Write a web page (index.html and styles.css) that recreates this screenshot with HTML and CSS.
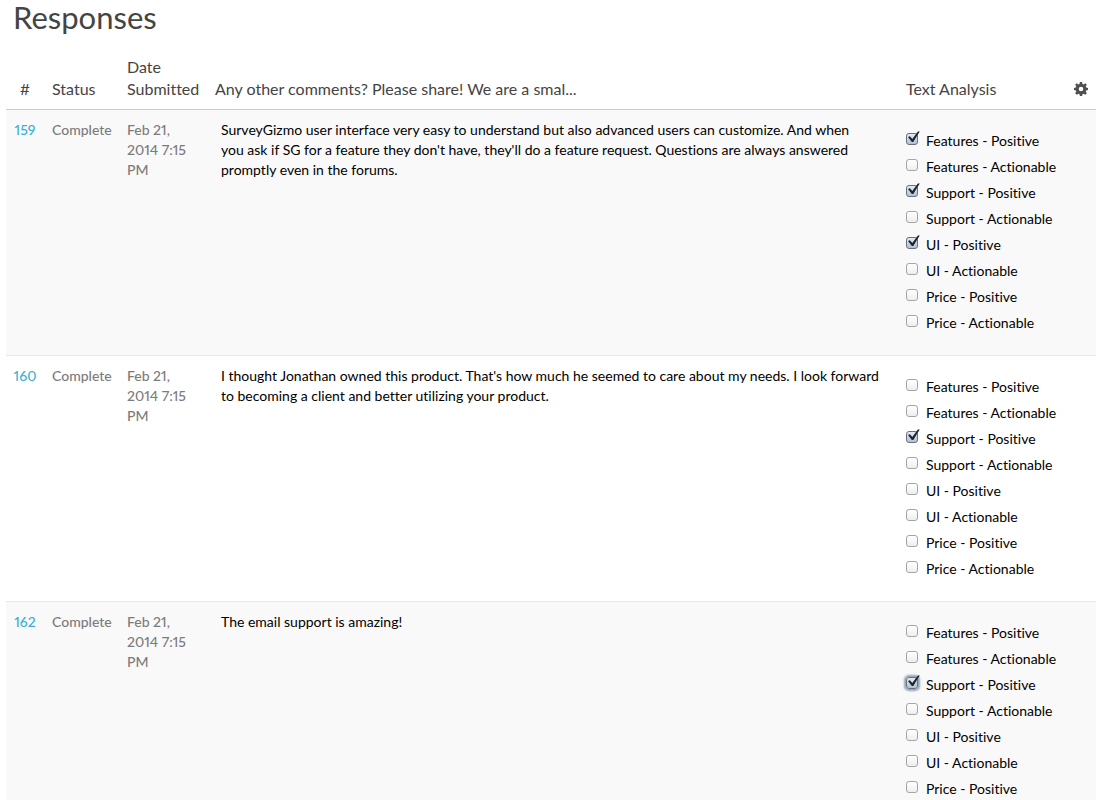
FILE: index.html
```
<!DOCTYPE html>
<html lang="en">
<head>
  <meta charset="UTF-8">
  <meta name="viewport" content="width=device-width, initial-scale=1.0">
  <title>Responses</title>
  <link rel="stylesheet" href="styles.css">
</head>
<body>
  <h1>Responses</h1>
  <table class="responses">
    <colgroup>
      <col class="col-id">
      <col class="col-status">
      <col class="col-date">
      <col>
      <col class="col-analysis">
      <col class="col-settings">
    </colgroup>
    <thead>
      <tr>
        <th class="id">#</th>
        <th>Status</th>
        <th>Date Submitted</th>
        <th>Any other comments? Please share! We are a smal...</th>
        <th>Text Analysis</th>
        <th class="settings">
          <button type="button" aria-label="Table settings">
            <svg viewBox="0 0 14 14" width="14" height="14"><path fill="#505050" fill-rule="evenodd" d="M5.9 0h2.2l.4 1.9 1.1.5 1.7-1.1 1.5 1.5-1.1 1.7.5 1.1 1.8.3v2.2l-1.8.4-.5 1.1 1.1 1.7-1.5 1.5-1.7-1.1-1.1.5L8.1 14H5.9l-.4-1.8-1.1-.5-1.7 1.1-1.5-1.5 1.1-1.7-.5-1.1L0 8.1V5.9l1.8-.3.5-1.1-1.1-1.7 1.5-1.5 1.7 1.1 1.1-.5zM7 4.7a2.3 2.3 0 1 0 0 4.6 2.3 2.3 0 0 0 0-4.6z"/></svg>
          </button>
        </th>
      </tr>
    </thead>
    <tbody>
      <tr>
        <td class="id"><a href="#159">159</a></td>
        <td class="meta">Complete</td>
        <td class="meta">Feb 21, 2014 7:15 PM</td>
        <td class="comment">SurveyGizmo user interface very easy to understand but also advanced users can customize. And when you&nbsp;ask if SG for a feature they don't have, they'll do a feature request. Questions are always answered promptly even in the forums.</td>
        <td class="analysis" colspan="2">
          <label><input type="checkbox" checked>Features - Positive</label>
          <label><input type="checkbox">Features - Actionable</label>
          <label><input type="checkbox" checked>Support - Positive</label>
          <label><input type="checkbox">Support - Actionable</label>
          <label><input type="checkbox" checked>UI - Positive</label>
          <label><input type="checkbox">UI - Actionable</label>
          <label><input type="checkbox">Price - Positive</label>
          <label><input type="checkbox">Price - Actionable</label>
        </td>
      </tr>
      <tr>
        <td class="id"><a href="#160">160</a></td>
        <td class="meta">Complete</td>
        <td class="meta">Feb 21, 2014 7:15 PM</td>
        <td class="comment">I thought Jonathan owned this product. That's how much he seemed to care about my needs. I look forward to becoming a client and better utilizing your product.</td>
        <td class="analysis" colspan="2">
          <label><input type="checkbox">Features - Positive</label>
          <label><input type="checkbox">Features - Actionable</label>
          <label><input type="checkbox" checked>Support - Positive</label>
          <label><input type="checkbox">Support - Actionable</label>
          <label><input type="checkbox">UI - Positive</label>
          <label><input type="checkbox">UI - Actionable</label>
          <label><input type="checkbox">Price - Positive</label>
          <label><input type="checkbox">Price - Actionable</label>
        </td>
      </tr>
      <tr>
        <td class="id"><a href="#162">162</a></td>
        <td class="meta">Complete</td>
        <td class="meta">Feb 21, 2014 7:15 PM</td>
        <td class="comment">The email support is amazing!</td>
        <td class="analysis" colspan="2">
          <label><input type="checkbox">Features - Positive</label>
          <label><input type="checkbox">Features - Actionable</label>
          <label><input type="checkbox" class="active" checked>Support - Positive</label>
          <label><input type="checkbox">Support - Actionable</label>
          <label><input type="checkbox">UI - Positive</label>
          <label><input type="checkbox">UI - Actionable</label>
          <label><input type="checkbox">Price - Positive</label>
        </td>
      </tr>
    </tbody>
  </table>
</body>
</html>
```
FILE: styles.css
```
body {
  margin: 0;
  padding: 0 6px;
  background: #fff;
  color: #000;
  font-family: Lato, "Open Sans", sans-serif;
  font-size: 14px;
  font-variant-ligatures: none;
  font-variant-numeric: proportional-nums;
  line-height: 20px;
}
h1 {
  margin: 0;
  padding: 0 7px;
  font-size: 31px;
  font-weight: 400;
  line-height: 34px;
  color: #444;
}
.responses {
  width: 100%;
  margin-top: 14px;
  table-layout: fixed;
  border-collapse: separate;
  border-spacing: 0;
}
.col-id {
  width: 38px;
}
.col-status {
  width: 75px;
}
.col-date {
  width: 88px;
}
.col-analysis {
  width: 160px;
}
.col-settings {
  width: 38px;
}
th {
  padding: 8px 8px 9px;
  border-bottom: 1px solid #ccc;
  font-size: 16px;
  font-weight: 400;
  line-height: 22px;
  text-align: left;
  vertical-align: bottom;
  color: #444;
}
td {
  padding: 10px 8px;
  border-bottom: 1px solid #e8e8e8;
  vertical-align: top;
}
tbody tr:nth-child(odd) {
  background: #f9f9f9;
}
th.id,
td.id {
  padding-left: 0;
  padding-right: 0;
  text-align: center;
}
.id a {
  color: #3fafd0;
  font-weight: 500;
  text-decoration: none;
}
.id a:hover {
  text-decoration: underline;
}
.meta {
  color: #7c7c7c;
  font-weight: 500;
}
.comment {
  padding-left: 14px;
}
.settings button {
  display: flex;
  align-items: center;
  height: 22px;
  margin-left: auto;
  padding: 0;
  border: 0;
  background: none;
  cursor: pointer;
}
.analysis {
  padding-top: 18px;
  padding-bottom: 19px;
}
.analysis label {
  display: flex;
  align-items: flex-start;
  gap: 8px;
  line-height: 26px;
}
input[type="checkbox"] {
  appearance: none;
  position: relative;
  box-sizing: border-box;
  flex: none;
  width: 12px;
  height: 12px;
  margin: 5px 0 0;
  border: 1px solid #a5a5a5;
  border-radius: 3px;
  background: linear-gradient(#fff, #eee);
}
input[type="checkbox"]:checked {
  border-color: #67717f;
  background: linear-gradient(#e3eaf2, #b4c1d0);
}
input[type="checkbox"]:checked::before {
  content: "";
  position: absolute;
  left: 1px;
  top: -3px;
  width: 12px;
  height: 12px;
  background: #1b2634;
  clip-path: polygon(0 50%, 15% 44%, 36% 66%, 82% 4%, 98% 4%, 44% 92%, 32% 92%);
}
input[type="checkbox"].active {
  box-shadow: 0 0 2px 2px #94a4b5;
}
```
